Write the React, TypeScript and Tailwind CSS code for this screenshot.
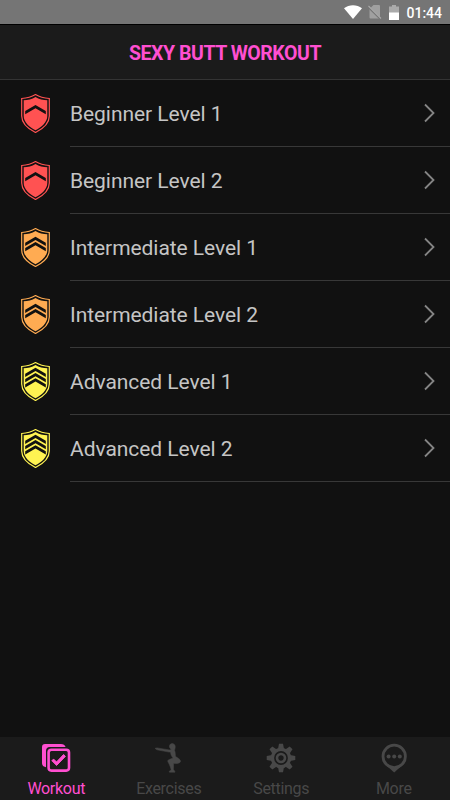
import React from "react";

const SHIELD = "M14.5 0.6 C18.5 3.1 23.6 4.3 28.3 4.5 V22 C28.3 29 22 34.8 14.5 38.5 C7 34.8 0.7 29 0.7 22 V4.5 C5.4 4.3 10.5 3.1 14.5 0.6 Z";
const INNER = "M14.5 2.9 C18 5 22.3 6 26.3 6.3 V21.9 C26.3 27.9 20.8 32.9 14.5 36.3 C8.2 32.9 2.7 27.9 2.7 21.9 V6.3 C6.7 6 11 5 14.5 2.9 Z";

function Shield({ color, marks }: { color: string; marks: number[] }) {
  return (
    <svg width="29" height="39" viewBox="0 0 29 39" className="block shrink-0">
      <path d={SHIELD} fill="#111" stroke={color} strokeWidth="1.2" />
      <path d={INNER} fill={color} />
      {marks.map((y) => (
        <path key={y} d={`M14.5 ${y} L24.8 ${y + 6} V${y + 9.2} L14.5 ${y + 3.3} L4.2 ${y + 9.2} V${y + 6} Z`} fill="#111" />
      ))}
    </svg>
  );
}

const levels = [
  { name: "Beginner Level 1", color: "#ff5252", marks: [11] },
  { name: "Beginner Level 2", color: "#ff5252", marks: [11] },
  { name: "Intermediate Level 1", color: "#ffab52", marks: [8.8, 14] },
  { name: "Intermediate Level 2", color: "#ffab52", marks: [8.8, 14] },
  { name: "Advanced Level 1", color: "#fff352", marks: [5.8, 11, 16.2] },
  { name: "Advanced Level 2", color: "#fff352", marks: [5.8, 11, 16.2] },
];

function WorkoutIcon() {
  return (
    <svg width="30" height="30" viewBox="0 0 30 30" fill="none">
      <path d="M3 23.5 C1.6 22.8 1 21.6 1 20 V4 Q1 1 4 1 H20 C22.3 1 24 2 24.6 4 H9 Q5 4 5 8 V24.2 Z" fill="#ff4fd0" />
      <rect x="7.6" y="6.8" width="20.4" height="20.8" rx="2.8" stroke="#ff4fd0" strokeWidth="2.6" />
      <path d="M10.8 17.6 L12.8 16.2 L15.5 19 L22.6 11.5 L24.4 13.4 L15.6 22.4 Z" fill="#ff4fd0" stroke="#ff4fd0" strokeWidth="1" strokeLinejoin="round" />
    </svg>
  );
}

function SquatIcon() {
  return (
    <svg width="30" height="30" viewBox="0 0 30 30" fill="#484848" stroke="#484848" strokeWidth="0.5" strokeLinejoin="round">
      <path d="M1 5.4 L3 4.9 L15.3 6.9 L17.4 6.5 C15.3 5.2 14.7 2.6 16.3 1.2 C18.2 -0.3 20.9 0.9 21.2 3.3 C21.4 5.1 20.8 6.2 20.5 7.3 C21.6 9.8 21.1 12.2 21.6 13.5 C23.6 15 26.6 16.2 26.5 18.2 C26.3 20.6 22.2 20.6 19.5 20.6 C19.7 23.2 19.4 25 19.4 26.7 C20.5 27.4 21 28.3 21 29.2 H15.4 L15.2 28.3 L17.2 27 C16.6 24.5 15.7 21.8 14 19 C13.4 17.7 14 17 15.3 16.5 L19.1 14.9 C17.2 13.1 16.7 11.2 16.5 9 L15 9.1 L3 6.8 Z" />
    </svg>
  );
}

function GearIcon() {
  return (
    <svg width="30" height="30" viewBox="-15 -15 30 30" fill="none">
      {[0, 45, 90, 135, 180, 225, 270, 315].map((a) => (
        <path key={a} d="M-3 -9 L-2 -14.3 H2 L3 -9 Z" fill="#484848" transform={`rotate(${a})`} />
      ))}
      <circle r="8.6" stroke="#484848" strokeWidth="3.4" />
      <circle r="4" stroke="#484848" strokeWidth="2.6" />
    </svg>
  );
}

function MoreIcon() {
  return (
    <svg width="30" height="30" viewBox="0 0 30 30" fill="none">
      <path d="M8 23 L15.2 29.5 L22.4 23 Z" fill="#484848" />
      <circle cx="15.2" cy="13.4" r="11.2" fill="#1b1b1b" stroke="#484848" strokeWidth="2.8" />
      <g fill="#484848">
        <circle cx="9.6" cy="13.5" r="2" />
        <circle cx="15.2" cy="13.5" r="2" />
        <circle cx="20.8" cy="13.5" r="2" />
      </g>
    </svg>
  );
}

const tabs = [
  { name: "Workout", icon: <WorkoutIcon />, tone: "text-[#ff4fd0]" },
  { name: "Exercises", icon: <SquatIcon />, tone: "text-[#484848]" },
  { name: "Settings", icon: <GearIcon />, tone: "text-[#484848]" },
  { name: "More", icon: <MoreIcon />, tone: "text-[#484848]" },
];

export default function App() {
  return (
    <div className="flex h-[800px] w-[450px] flex-col overflow-hidden bg-[#111] font-[Roboto,sans-serif]">
      <div className="flex h-6 shrink-0 items-center justify-end bg-[#757575] pr-2 text-white">
        <svg width="18" height="14" viewBox="0 0 18 14" className="mr-[6px]">
          <path d="M0 3.2 C5.2 -0.9 12.8 -0.9 18 3.2 L9 14 Z" fill="#fff" />
        </svg>
        <svg width="14" height="14" viewBox="0 0 14 14" className="mr-[7px]">
          <path d="M5.5 0 H11 Q12 0 12 1 V12.5 Q12 13.5 11 13.5 H2.5 Q1.5 13.5 1.5 12.5 V4 Z" fill="#a0a0a0" />
          <path d="M0.2 1.8 L12.5 14" stroke="#757575" strokeWidth="2" />
          <path d="M0.5 1 L13 13.5" stroke="#aaa" strokeWidth="1.1" />
        </svg>
        <svg width="10" height="15" viewBox="0 0 10 15" className="mr-[7px]">
          <path d="M3 0 H7 V1.5 H10 V8 H0 V1.5 H3 Z" fill="#aaa" />
          <path d="M0 7.5 H10 V15 H0 Z" fill="#fff" />
        </svg>
        <span className="pt-px text-[14px] leading-6 font-medium">01:44</span>
      </div>
      <header className="flex h-14 shrink-0 items-center justify-center border-t border-b border-t-black border-b-[#343434] bg-[#1b1b1b]">
        <h1 className="pt-[3px] text-[19.5px] font-bold tracking-[-0.45px] whitespace-nowrap text-[#ff4fd0]">SEXY BUTT WORKOUT</h1>
      </header>
      <main className="flex-1">
        {levels.map((l) => (
          <div key={l.name} className="flex h-[67px] items-center pl-[21px]">
            <Shield color={l.color} marks={l.marks} />
            <div className="ml-5 flex h-full flex-1 items-center justify-between border-b border-[#383838] pr-[15px]">
              <span className="pt-[3px] text-[21px] tracking-[-0.06px] whitespace-nowrap text-[#c5c5c5]">{l.name}</span>
              <svg width="11" height="20" viewBox="0 0 11 20" fill="none">
                <path d="M1 1.5 L9.5 10 L1 18.5" stroke="#858585" strokeWidth="1.8" />
              </svg>
            </div>
          </div>
        ))}
      </main>
      <nav className="grid h-[63px] shrink-0 grid-cols-4 bg-[#1b1b1b]">
        {tabs.map((t) => (
          <div key={t.name} className={`flex flex-col items-center pt-[6px] ${t.tone}`}>
            {t.icon}
            <span className="mt-[6px] text-[16px] leading-5 tracking-[-0.3px]">{t.name}</span>
          </div>
        ))}
      </nav>
    </div>
  );
}
